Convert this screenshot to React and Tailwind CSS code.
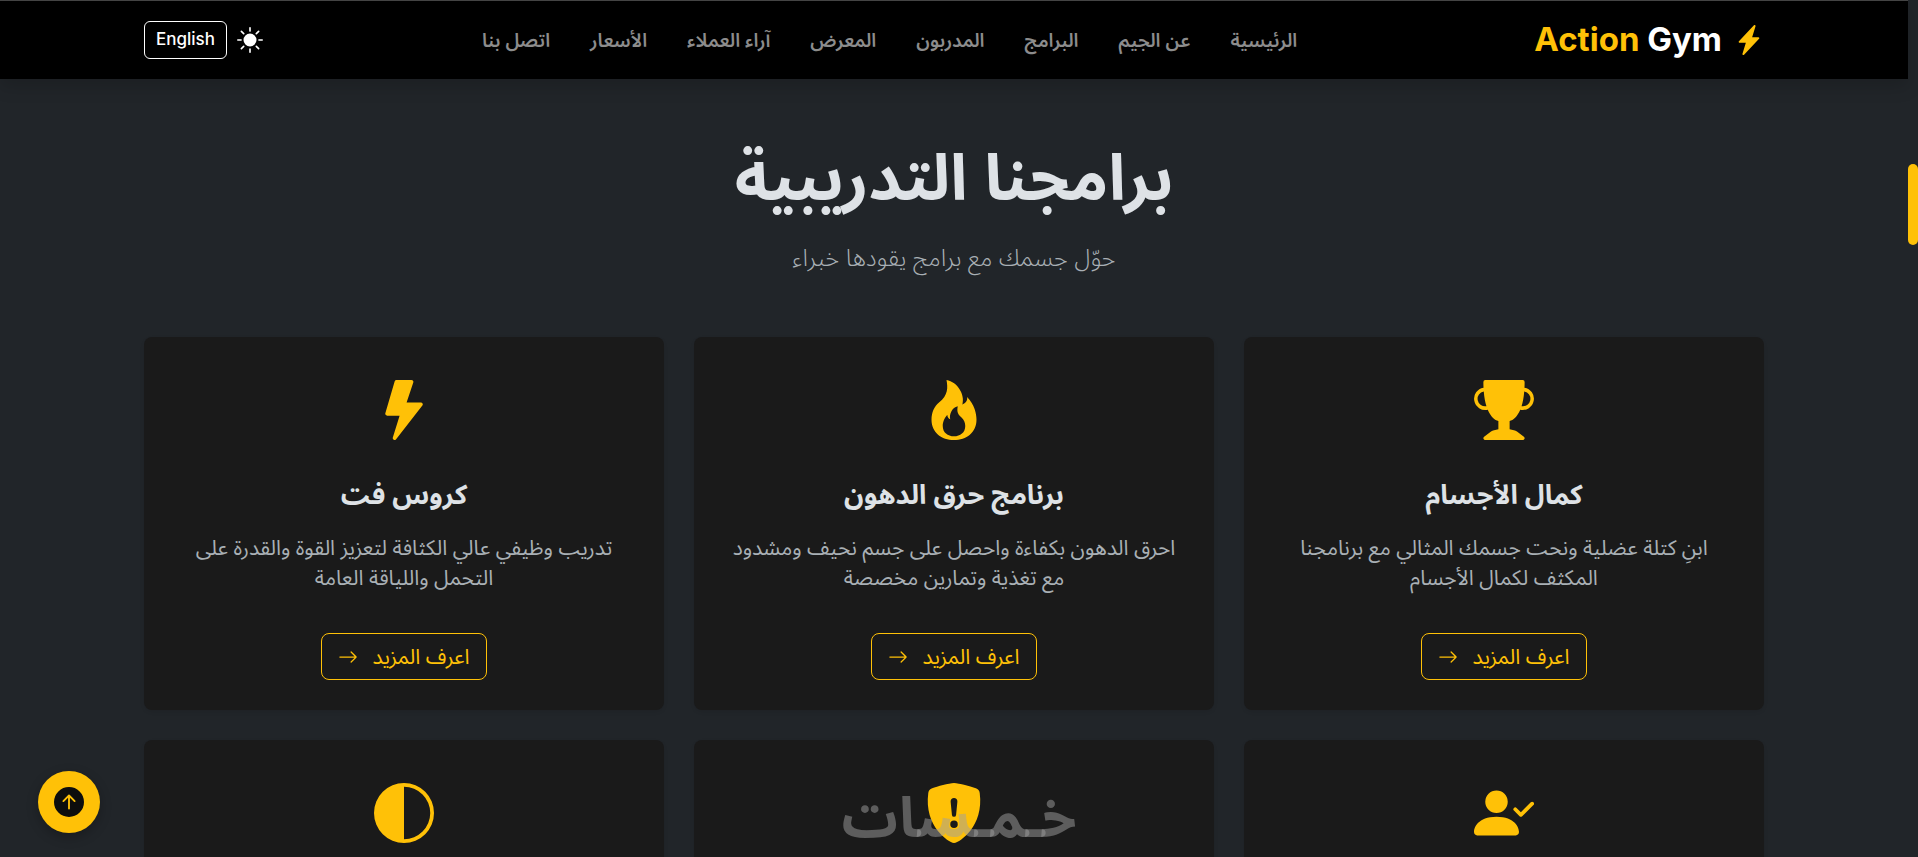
import React from 'react';
import {
  BsArrowRight,
  BsArrowUpCircleFill,
  BsCircleHalf,
  BsFire,
  BsLightningChargeFill,
  BsLightningFill,
  BsPersonCheckFill,
  BsShieldFillExclamation,
  BsSunFill,
  BsTrophyFill,
} from 'react-icons/bs';

const navLinks = [
  { label: 'الرئيسية', href: '#home' },
  { label: 'عن الجيم', href: '#about' },
  { label: 'البرامج', href: '#programs' },
  { label: 'المدربون', href: '#trainers' },
  { label: 'المعرض', href: '#gallery' },
  { label: 'آراء العملاء', href: '#testimonials' },
  { label: 'الأسعار', href: '#pricing' },
  { label: 'اتصل بنا', href: '#contact' },
];

const programs = [
  {
    icon: BsTrophyFill,
    title: 'كمال الأجسام',
    text: 'ابنِ كتلة عضلية ونحت جسمك المثالي مع برنامجنا المكثف لكمال الأجسام',
  },
  {
    icon: BsFire,
    title: 'برنامج حرق الدهون',
    text: 'احرق الدهون بكفاءة واحصل على جسم نحيف ومشدود مع تغذية وتمارين مخصصة',
  },
  {
    icon: BsLightningFill,
    title: 'كروس فت',
    text: 'تدريب وظيفي عالي الكثافة لتعزيز القوة والقدرة على التحمل واللياقة العامة',
  },
  { icon: BsPersonCheckFill },
  { icon: BsShieldFillExclamation },
  { icon: BsCircleHalf },
];

const Navbar = () => (
  <header className="relative z-10 border-t border-[#444] bg-black shadow-[0_8px_16px_rgba(0,0,0,0.15)]">
    <nav className="mx-auto flex h-[78px] max-w-[1644px] items-center justify-between px-3">
      <a href="#home" className="me-5 flex items-center gap-3 font-['Inter',sans-serif] text-[33px] font-bold text-white">
        <BsLightningChargeFill className="size-[30px] text-[#ffc107]" />
        <span dir="ltr">
          <span className="text-[#ffc107]">Action</span> Gym
        </span>
      </a>
      <ul className="flex items-center gap-10">
        {navLinks.map((link) => (
          <li key={link.href}>
            <a href={link.href} className="text-[19px] font-semibold text-[#8c8c8c] hover:text-white">
              {link.label}
            </a>
          </li>
        ))}
      </ul>
      <div className="flex items-center gap-2">
        <button type="button" aria-label="الوضع الفاتح" className="p-0.5 text-white">
          <BsSunFill className="size-[26px]" />
        </button>
        <button type="button" className="h-[38px] rounded-md border border-white px-[11px] font-['Inter',sans-serif] text-[17px] font-medium text-white">
          English
        </button>
      </div>
    </nav>
  </header>
);

const ProgramCard = ({ icon: Icon, title, text }) => (
  <article className="flex min-h-[373px] flex-col items-center rounded-lg bg-[#1a1a1a] px-8 pt-[43px] pb-[30px] text-center shadow-[0_2px_4px_rgba(0,0,0,0.08)]">
    <Icon className="size-[60px] shrink-0 text-[#ffc107]" />
    {title && (
      <>
        <h3 className="mt-[34px] text-[27px] leading-10 font-bold">{title}</h3>
        <p className="mt-[18px] text-[21px] leading-[30px] text-[#a9b0b5]">{text}</p>
        <a
          href="#pricing"
          className="mt-auto flex h-[47px] items-center gap-3.5 rounded-lg border border-[#ffc107] px-4 text-[21px] text-[#ffc107] hover:bg-[#ffc107] hover:text-black"
        >
          {'اعرف المزيد'}
          <BsArrowRight className="size-5" />
        </a>
      </>
    )}
  </article>
);

const App = () => {
  return (
    <div dir="rtl" className="relative flex h-screen overflow-hidden bg-[#212529] font-['Open_Sans','Noto_Sans_Arabic','Noto_Sans','DejaVu_Sans',sans-serif] text-[#dee2e6]">
      {/* Scroll indicator */}
      <div className="w-2.5 shrink-0 pt-[164px]">
        <div className="h-[81px] rounded-[5px] bg-[#ffc107]"></div>
      </div>

      <div className="min-w-0 flex-1">
        <Navbar />
        <main className="mx-auto max-w-[1644px] px-3 pt-[54px]">
          <div className="text-center">
            <h2 className="text-[64px] leading-[86px] font-bold">برامجنا التدريبية</h2>
            <p className="mt-5 text-2xl leading-9 font-light text-[#a9b0b5]">حوّل جسمك مع برامج يقودها خبراء</p>
          </div>
          <div className="mt-[62px] grid grid-cols-3 gap-[30px]">
            {programs.map((program, i) => (
              <ProgramCard key={i} {...program} />
            ))}
          </div>
        </main>
      </div>

      <button
        type="button"
        aria-label="إلى الأعلى"
        className="absolute bottom-6 left-[38px] z-20 flex size-[62px] items-center justify-center rounded-full bg-[#ffc107] text-[#0d0d0d] shadow-[0_4px_12px_rgba(0,0,0,0.25)]"
      >
        <BsArrowUpCircleFill className="size-[30px]" />
      </button>

      {/* Watermark */}
      <div className="pointer-events-none absolute inset-x-0 bottom-0 z-10 text-center text-[56px] leading-[84px] font-bold text-[#a0a0a0]/50">
        خـمـسات
      </div>
    </div>
  );
};

export default App;
